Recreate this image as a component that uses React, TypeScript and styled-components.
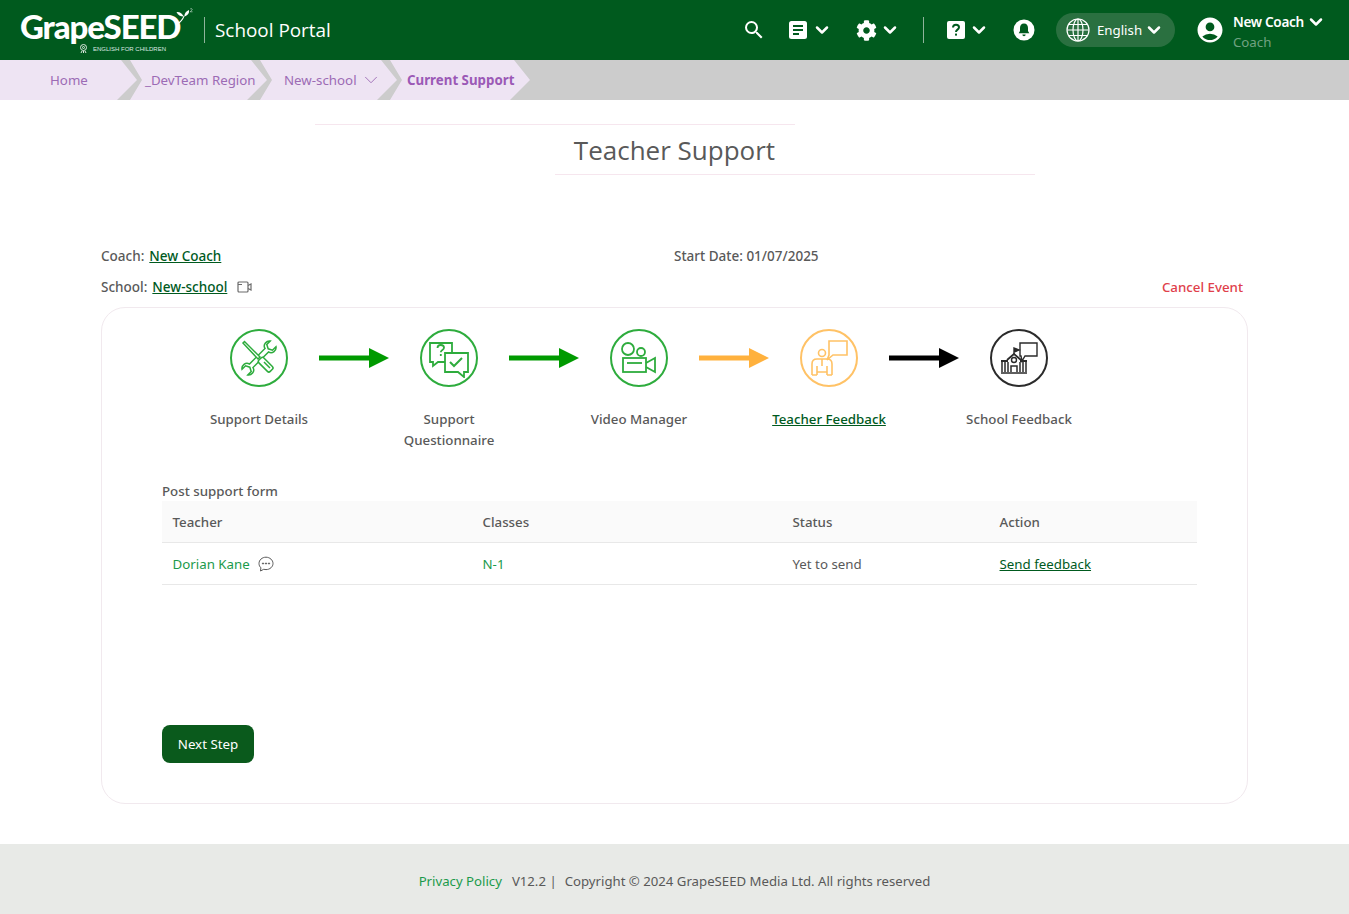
import React from 'react';
import styled, { createGlobalStyle } from 'styled-components';
import { ChevronDown } from 'lucide-react';
import { MdSearch, MdAccountCircle } from 'react-icons/md';
import { FaCog } from 'react-icons/fa';

const GlobalStyle = createGlobalStyle`
  html, body {
    margin: 0;
    padding: 0;
    background: #fff;
    font-family: 'Noto Sans', 'Open Sans', sans-serif;
    font-size: 13.3px;
    color: #595959;
  }
  * { box-sizing: border-box; }
`;

const Page = styled.div`
  min-height: 914px;
  display: flex;
  flex-direction: column;
`;

const Header = styled.header`
  height: 60px;
  background: #005a1e;
  display: flex;
  align-items: center;
  padding: 0 23px 0 20px;
  color: #fff;
`;

const Logo = styled.div`
  width: 175px;
  display: flex;
  flex-direction: column;
  position: relative;
`;

const LogoName = styled.span`
  font-family: 'Lato', sans-serif;
  font-weight: 900;
  font-size: 33px;
  line-height: 38px;
  letter-spacing: -1.1px;
  color: #fff;
`;

const LogoTag = styled.span`
  font-family: 'Liberation Sans', sans-serif;
  font-size: 6px;
  line-height: 6px;
  margin-top: -1px;
  margin-left: 59px;
  color: #dfe9e2;
  white-space: nowrap;
  display: flex;
  align-items: center;
  gap: 5px;
`;

const Sprout = styled.svg`
  position: absolute;
  left: 155px;
  top: 1px;
`;

const Divider = styled.div<{ $left: number }>`
  width: 1px;
  height: 26px;
  background: #8fb39b;
  margin-left: ${(props) => props.$left}px;
`;

const PortalName = styled.span`
  font-size: 18.9px;
  margin-left: 10px;
  line-height: 26px;
  font-family: 'Open Sans', sans-serif;
`;

const HeaderRight = styled.div`
  margin-left: auto;
  display: flex;
  align-items: center;
`;

const IconGroup = styled.div<{ $left: number; $gap?: number }>`
  display: flex;
  align-items: center;
  gap: ${(props) => props.$gap ?? 3}px;
  margin-left: ${(props) => props.$left}px;
`;

const LangPill = styled.div`
  width: 119px;
  height: 34px;
  margin-left: 21px;
  border-radius: 17px;
  background: #2a7040;
  display: flex;
  align-items: center;
  padding-left: 10px;
  gap: 7px;
`;

const LangName = styled.span`
  margin-right: -5px;
`;

const UserBox = styled.div`
  display: flex;
  align-items: center;
  margin-left: 20px;
  gap: 8px;
`;

const UserText = styled.div`
  display: flex;
  flex-direction: column;
  gap: 2px;
  line-height: 18px;
  padding-top: 4px;
`;

const UserNameRow = styled.div`
  display: flex;
  align-items: center;
  gap: 2px;
  height: 18px;
  font-size: 13.6px;
  font-weight: 600;
  letter-spacing: -0.3px;
`;

const UserRole = styled.div`
  color: #71a282;
`;

const Crumbs = styled.nav`
  height: 40px;
  background: #cccccc;
  display: flex;
`;

const Crumb = styled.div<{ $width: number; $pad: number; $first?: boolean; $current?: boolean }>`
  width: ${(props) => props.$width}px;
  height: 40px;
  margin-left: ${(props) => (props.$first ? 0 : -7)}px;
  background: #eee4f3;
  color: ${(props) => (props.$current ? '#9b59b6' : '#9c6bb5')};
  font-weight: ${(props) => (props.$current ? 700 : 400)};
  white-space: nowrap;
  display: flex;
  align-items: center;
  gap: 3px;
  padding-left: ${(props) => props.$pad}px;
  clip-path: ${(props) =>
    props.$first
      ? 'polygon(0 0, calc(100% - 16px) 0, 100% 50%, calc(100% - 20px) 100%, 0 100%)'
      : 'polygon(0 0, calc(100% - 16px) 0, 100% 50%, calc(100% - 20px) 100%, 0 100%, 12px 50%)'};
`;

const TitleBlock = styled.div`
  margin-top: 24px;
  display: flex;
  flex-direction: column;
  align-items: center;
`;

const TitleRule = styled.div<{ $shift: number }>`
  width: 480px;
  height: 1px;
  background: #f6e6ee;
  margin-left: ${(props) => props.$shift}px;
`;

const Title = styled.h1`
  margin: 0;
  height: 49px;
  line-height: 50px;
  font-size: 26px;
  font-weight: 400;
  font-family: 'Open Sans', sans-serif;
  color: #595959;
`;

const Main = styled.main`
  padding: 0 101px;
  margin-top: 71px;
  flex: 1;
`;

const InfoRow = styled.div`
  display: grid;
  grid-template-columns: 573px 1fr auto;
  height: 31px;
  line-height: 20px;
  font-size: 13.5px;
  font-weight: 500;
`;

const InfoLabel = styled.div`
  display: flex;
  align-items: center;
  height: 20px;
  gap: 5px;
  color: #595959;
`;

const GreenLink = styled.a`
  color: #005a1e;
  text-decoration: underline;
  cursor: pointer;
`;

const CancelLink = styled.a`
  color: #e0404b;
  font-size: 13.3px;
  margin-right: 5px;
`;

const Card = styled.section`
  height: 497px;
  border: 1px solid #f1e9ee;
  border-radius: 24px;
  padding: 21px 50px 0 60px;
  margin-top: -1px;
  display: flex;
  flex-direction: column;
`;

const Steps = styled.div`
  display: flex;
  margin-left: 37px;
  height: 132px;
`;

const Step = styled.div`
  width: 120px;
  display: flex;
  flex-direction: column;
  align-items: center;
`;

const StepCircle = styled.div<{ $color: string }>`
  width: 58px;
  height: 58px;
  border-radius: 50%;
  border: 2px solid ${(props) => props.$color};
  color: ${(props) => props.$color};
  display: flex;
  align-items: center;
  justify-content: center;
`;

const StepLabel = styled.div<{ $active?: boolean }>`
  margin-top: 22px;
  text-align: center;
  line-height: 21px;
  font-weight: 500;
  color: ${(props) => (props.$active ? '#005a1e' : '#595959')};
  text-decoration: ${(props) => (props.$active ? 'underline' : 'none')};
`;

const StepArrow = styled.svg`
  width: 70px;
  height: 58px;
  flex: none;
`;

const FormTitle = styled.div`
  line-height: 20px;
  margin-top: 20px;
  font-weight: 500;
`;

const TableGrid = styled.div`
  width: 1035px;
  display: grid;
  grid-template-columns: 310px 310px 207px 208px;
`;

const HeadCell = styled.div`
  height: 42px;
  background: #fafafa;
  border-bottom: 1px solid #e8e8e8;
  padding-left: 10.5px;
  display: flex;
  align-items: center;
  font-weight: 500;
`;

const BodyCell = styled.div<{ $green?: boolean }>`
  height: 42px;
  border-bottom: 1px solid #e8e8e8;
  padding-left: 10.5px;
  display: flex;
  align-items: center;
  gap: 8px;
  color: ${(props) => (props.$green ? '#1b9a4b' : '#595959')};
`;

const NextButton = styled.button`
  width: 92px;
  height: 38px;
  margin-top: 140px;
  border: none;
  border-radius: 8px;
  background: #0a5a1c;
  color: #fff;
  font-family: inherit;
  font-size: 13.3px;
`;

const Footer = styled.footer`
  height: 70px;
  background: #e8eae7;
  display: flex;
  align-items: center;
  justify-content: center;
  padding-top: 3px;
  font-size: 13.2px;
`;

const FooterLink = styled.a`
  color: #1b9a4b;
`;

const FooterPart = styled.span<{ $left: number }>`
  margin-left: ${(props) => props.$left}px;
`;

const Chevron = () => <ChevronDown size={20} strokeWidth={3} color="#fff" />;

const DocIcon = () => (
  <svg width="20" height="20" viewBox="0 0 20 20">
    <rect x="1" y="1" width="18" height="18" rx="2.5" fill="#fff" />
    <path d="M5 6h10M5 10h10M5 14h6" stroke="#005a1e" strokeWidth="2" />
  </svg>
);

const HelpIcon = () => (
  <svg width="20" height="20" viewBox="0 0 20 20">
    <rect x="1" y="1" width="18" height="18" rx="2" fill="#fff" />
    <path
      d="M7 7.6c0-1.8 1.3-2.8 3-2.8s3 1 3 2.5c0 2.4-3 2.3-3 4.6"
      fill="none"
      stroke="#005a1e"
      strokeWidth="2"
    />
    <rect x="9" y="13.6" width="2" height="2" fill="#005a1e" />
  </svg>
);

const BellIcon = () => (
  <svg width="22" height="22" viewBox="0 0 22 22">
    <circle cx="11" cy="11" r="10.5" fill="#fff" />
    <path
      d="M11 4.5c-2.6 0-4 2-4 4.5v3l-1.3 2.3h10.6L15 12V9c0-2.5-1.4-4.5-4-4.5z"
      fill="#005a1e"
    />
    <path d="M9.4 15.6h3.2c0 1-.7 1.6-1.6 1.6s-1.6-.6-1.6-1.6z" fill="#005a1e" />
  </svg>
);

const GlobeIcon = () => (
  <svg width="24" height="24" viewBox="0 0 24 24" fill="none" stroke="#fff" strokeWidth="1.2">
    <circle cx="12" cy="12" r="11" />
    <ellipse cx="12" cy="12" rx="5" ry="11" />
    <path d="M12 1v22M1 12h22M2.6 6.5h18.8M2.6 17.5h18.8" />
  </svg>
);

const SproutIcon = () => (
  <Sprout width="20" height="17" viewBox="0 0 30 26" fill="#fff">
    <path d="M3 24C7 21 11 17 13 12l1.2.6C12.5 18 8 22.500 4 25z" />
    <path d="M13 13C8 13 4 11 2 6c5-.5 9 2 11 7z" />
    <path d="M14 13c0-4 2-8 7-10 1 4-1 8-7 10z" />
    <path
      d="M23 1.500c1-1 3-.6 3 .8 0 1.200-2 2-3 3.500h3.500"
      fill="none"
      stroke="#fff"
      strokeWidth="0.8"
    />
  </Sprout>
);

const TagMark = () => (
  <svg width="9" height="9" viewBox="0 0 9 9" fill="none" stroke="#dfe9e2" strokeWidth="1">
    <circle cx="4.500" cy="3.500" r="3" />
    <circle cx="4.500" cy="3.500" r="1" />
    <path d="M3 7l-1 2M6 7l1 2M4.500 7v2" />
  </svg>
);

const ToolsIcon = () => (
  <svg width="40" height="40" viewBox="0 0 40 40" fill="none" stroke="currentColor" strokeWidth="1.5">
    <path
      transform="translate(20 20) rotate(45)"
      d="M-2.500 -11C-7 -12 -7 -18 -4 -20L-4 -15L0 -13L4 -15L4 -20C7 -18 7 -12 2.500 -11L2.500 11C7 12 7 18 4 20L4 15L0 13L-4 15L-4 20C-7 18 -7 12 -2.500 11Z"
      fill="#fff"
    />
    <path d="M4 5l1.500-1.500L21 19l-2 2z" fill="#fff" />
    <rect x="-3.500" y="0" width="7" height="16" rx="2" transform="translate(21 21) rotate(-45)" fill="#fff" />
    <path d="M25 24l6 6" />
  </svg>
);

const ChatIcon = () => (
  <svg width="40" height="40" viewBox="0 0 40 40" fill="none" stroke="currentColor" strokeWidth="1.8">
    <path d="M1 5h22v19H9l-5 4v-4H1z" />
    <path d="M16 15h23v19h-4v5l-6-5H16z" fill="#fff" />
    <path d="M21 24l4 4 8-8" strokeWidth="2" />
    <path d="M8.500 10c0-2 1.500-3 3.300-3s3.200 1 3.200 2.800c0 2.400-3.200 2.200-3.200 4.500M11.800 16v2" />
  </svg>
);

const CameraIcon = () => (
  <svg width="40" height="40" viewBox="0 0 40 40" fill="none" stroke="currentColor" strokeWidth="1.8">
    <circle cx="9" cy="11" r="6" />
    <circle cx="22" cy="14" r="4" />
    <rect x="4" y="20" width="23" height="14" />
    <path d="M8 25h15" />
    <path d="M27 25l9-5v14l-9-5" />
  </svg>
);

const TeacherIcon = () => (
  <svg width="42" height="42" viewBox="0 0 42 42" fill="none" stroke="currentColor" strokeWidth="1.6">
    <path d="M21 4h18v14H25l-6 5 2-5z" />
    <circle cx="14" cy="16" r="3.500" />
    <path d="M4 38V27c0-3 2-5 5-5h10c3 0 5 2 5 5v11" />
    <path d="M9 38v-9M19 38v-9M4 38h5M19 38h5M9 35h10M14 22v7" />
  </svg>
);

const SchoolIcon = () => (
  <svg width="42" height="42" viewBox="0 0 42 42" fill="none" stroke="#2b2b2b" strokeWidth="1.4">
    <path d="M22 6h17v13H27l-3 5-1-5h-1z" fill="#fff" />
    <path d="M16 17v-6l5 2-5 2" fill="#2b2b2b" />
    <path d="M9 23l7-6 7 6" strokeWidth="1.800" />
    <circle cx="16" cy="23" r="2.500" />
    <path d="M3 24h7M22 24h7" strokeWidth="1.800" />
    <path d="M4 25v10M7 25v10M10 25v10M22 25v10M25 25v10M28 25v10M13 35v-6h6v6M3 36h26" strokeWidth="1.500" />
  </svg>
);

const VideoMini = () => (
  <svg width="15" height="12" viewBox="0 0 15 12" fill="none" stroke="#6b6b6b" strokeWidth="1.2" style={{ marginLeft: 5 }}>
    <rect x="1" y="1" width="10" height="10" rx="1" />
    <path d="M1 3.500h4M11 4.500l3-1.500v6l-3-1.500" />
  </svg>
);

const CommentIcon = () => (
  <svg width="16" height="16" viewBox="0 0 16 16" fill="none" stroke="#595959" strokeWidth="1">
    <path d="M8 1.200c-3.900 0-7 2.800-7 6.300 0 1.700.7 3.200 1.900 4.300L2.500 15l3.200-1.700c.7.200 1.500.3 2.300.3 3.900 0 7-2.800 7-6.100S11.900 1.200 8 1.200z" />
    <circle cx="5" cy="7.500" r=".6" fill="#595959" />
    <circle cx="8" cy="7.500" r=".6" fill="#595959" />
    <circle cx="11" cy="7.500" r=".6" fill="#595959" />
  </svg>
);

const Arrow = ({ color }: { color: string }) => (
  <StepArrow viewBox="0 0 70 58">
    <rect x="0" y="26.500" width="52" height="5" fill={color} />
    <polygon points="50,19 70,29 50,39" fill={color} />
  </StepArrow>
);

const GREEN = '#2eac3d';
const ORANGE = '#ffc266';

const App = () => {
  return (
    <Page>
      <GlobalStyle />
      <Header>
        <Logo>
          <LogoName>GrapeSEED</LogoName>
          <LogoTag>
            <TagMark />
            ENGLISH FOR CHILDREN
          </LogoTag>
          <SproutIcon />
        </Logo>
        <Divider $left={9} />
        <PortalName>School Portal</PortalName>
        <HeaderRight>
          <MdSearch size={24} color="#fff" />
          <IconGroup $left={22} $gap={4}>
            <DocIcon />
            <Chevron />
          </IconGroup>
          <IconGroup $left={24}>
            <FaCog size={21} color="#fff" />
            <Chevron />
          </IconGroup>
          <Divider $left={23} />
          <IconGroup $left={22}>
            <HelpIcon />
            <Chevron />
          </IconGroup>
          <IconGroup $left={24}>
            <BellIcon />
          </IconGroup>
          <LangPill>
            <GlobeIcon />
            <LangName>English</LangName>
            <Chevron />
          </LangPill>
          <UserBox>
            <MdAccountCircle size={30} color="#fff" />
            <UserText>
              <UserNameRow>
                New Coach
                <Chevron />
              </UserNameRow>
              <UserRole>Coach</UserRole>
            </UserText>
          </UserBox>
        </HeaderRight>
      </Header>

      <Crumbs>
        <Crumb $first $width={137} $pad={50}>Home</Crumb>
        <Crumb $width={137} $pad={15}>_DevTeam Region</Crumb>
        <Crumb $width={137} $pad={24}>
          New-school
          <ChevronDown size={22} strokeWidth={1} />
        </Crumb>
        <Crumb $current $width={140} $pad={17}>Current Support</Crumb>
      </Crumbs>

      <TitleBlock>
        <TitleRule $shift={-240} />
        <Title>Teacher Support</Title>
        <TitleRule $shift={240} />
      </TitleBlock>

      <Main>
        <InfoRow>
          <InfoLabel>
            Coach: <GreenLink>New Coach</GreenLink>
          </InfoLabel>
          <InfoLabel>Start Date: 01/07/2025</InfoLabel>
        </InfoRow>
        <InfoRow>
          <InfoLabel>
            School: <GreenLink>New-school</GreenLink>
            <VideoMini />
          </InfoLabel>
          <span />
          <CancelLink>Cancel Event</CancelLink>
        </InfoRow>

        <Card>
          <Steps>
            <Step>
              <StepCircle $color={GREEN}><ToolsIcon /></StepCircle>
              <StepLabel>Support Details</StepLabel>
            </Step>
            <Arrow color="#009a00" />
            <Step>
              <StepCircle $color={GREEN}><ChatIcon /></StepCircle>
              <StepLabel>Support Questionnaire</StepLabel>
            </Step>
            <Arrow color="#009a00" />
            <Step>
              <StepCircle $color={GREEN}><CameraIcon /></StepCircle>
              <StepLabel>Video Manager</StepLabel>
            </Step>
            <Arrow color="#ffb13d" />
            <Step>
              <StepCircle $color={ORANGE}><TeacherIcon /></StepCircle>
              <StepLabel $active>Teacher Feedback</StepLabel>
            </Step>
            <Arrow color="#000" />
            <Step>
              <StepCircle $color="#2b2b2b"><SchoolIcon /></StepCircle>
              <StepLabel>School Feedback</StepLabel>
            </Step>
          </Steps>

          <FormTitle>Post support form</FormTitle>
          <TableGrid>
            <HeadCell>Teacher</HeadCell>
            <HeadCell>Classes</HeadCell>
            <HeadCell>Status</HeadCell>
            <HeadCell>Action</HeadCell>
            <BodyCell $green>
              Dorian Kane
              <CommentIcon />
            </BodyCell>
            <BodyCell $green>N-1</BodyCell>
            <BodyCell>Yet to send</BodyCell>
            <BodyCell>
              <GreenLink>Send feedback</GreenLink>
            </BodyCell>
          </TableGrid>
          <NextButton>Next Step</NextButton>
        </Card>
      </Main>

      <Footer>
        <FooterLink>Privacy Policy</FooterLink>
        <FooterPart $left={10}>V12.2 |</FooterPart>
        <FooterPart $left={8}>Copyright © 2024 GrapeSEED Media Ltd. All rights reserved</FooterPart>
      </Footer>
    </Page>
  );
};

export default App;
